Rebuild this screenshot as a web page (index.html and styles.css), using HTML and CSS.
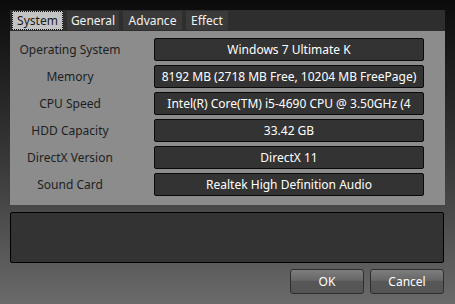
FILE: index.html
```html
<!DOCTYPE html>
<html lang="en">
<head>
    <meta charset="UTF-8">
    <title>System Information</title>
    <link rel="stylesheet" href="styles.css">
</head>
<body>
    <div class="dialog">
        <div class="tabs">
            <span class="tab active">System</span>
            <span class="tab">General</span>
            <span class="tab">Advance</span>
            <span class="tab">Effect</span>
        </div>

        <div class="panel">
            <span class="label">Operating System</span>
            <span class="value">Windows 7 Ultimate K</span>
            <span class="label">Memory</span>
            <span class="value">8192 MB (2718 MB Free, 10204 MB FreePage)</span>
            <span class="label">CPU Speed</span>
            <span class="value">Intel(R) Core(TM) i5-4690 CPU @ 3.50GHz (4</span>
            <span class="label">HDD Capacity</span>
            <span class="value">33.42 GB</span>
            <span class="label">DirectX Version</span>
            <span class="value">DirectX 11</span>
            <span class="label">Sound Card</span>
            <span class="value">Realtek High Definition Audio</span>
        </div>

        <div class="notes"></div>

        <div class="actions">
            <button class="btn">OK</button>
            <button class="btn">Cancel</button>
        </div>
    </div>
</body>
</html>
```

FILE: styles.css
```css
* {
    margin: 0;
    padding: 0;
    box-sizing: border-box;
}

body {
    font-family: 'Noto Sans', 'Noto Sans CJK KR', sans-serif;
    font-size: 12px;
    background: linear-gradient(180deg, #0b0b0b 0%, #3a3a3a 55%, #6a6a6a 100%);
    width: 455px;
    height: 304px;
    overflow: hidden;
}

.dialog {
    padding: 10px 10px 0 10px;
}

.tabs {
    display: flex;
    gap: 4px;
    height: 21px;
    padding: 1px 2px;
    background: #2e2e2e;
}

.tab {
    display: flex;
    align-items: center;
    justify-content: center;
    height: 19px;
    background: #3a3a3a;
    color: #f2f2f2;
}

.tab:nth-child(1) { width: 51px; }
.tab:nth-child(2) { width: 52px; }
.tab:nth-child(3) { width: 59px; }
.tab:nth-child(4) { width: 42px; }

.tab.active {
    background: #c4c4c4;
    color: #1a1a1a;
    outline: 1px dotted #111;
    outline-offset: -1px;
}

.panel {
    display: grid;
    grid-template-columns: 120px 270px;
    grid-auto-rows: 23px;
    column-gap: 24px;
    row-gap: 4px;
    padding: 7px 0 9px 0;
    background: #8c8c8c;
}

.label {
    display: flex;
    align-items: center;
    justify-content: center;
    color: #1e1e1e;
}

.value {
    display: flex;
    align-items: center;
    justify-content: center;
    background: #333;
    border: 1px solid #0a0a0a;
    border-radius: 2px;
    color: #fff;
    white-space: nowrap;
    overflow: hidden;
}

.notes {
    height: 51px;
    margin: 7px 1px 0 0;
    background: #333;
    border: 1px solid #000;
    border-radius: 2px;
}

.actions {
    display: flex;
    justify-content: flex-end;
    gap: 6px;
    margin-top: 6px;
    padding-right: 1px;
}

.btn {
    width: 74px;
    height: 25px;
    font-family: inherit;
    font-size: 12px;
    color: #fff;
    background: linear-gradient(180deg, #7e7e7e 0%, #666 45%, #575757 50%, #555 100%);
    border: 1px solid #2e2e2e;
    border-radius: 3px;
}
```
